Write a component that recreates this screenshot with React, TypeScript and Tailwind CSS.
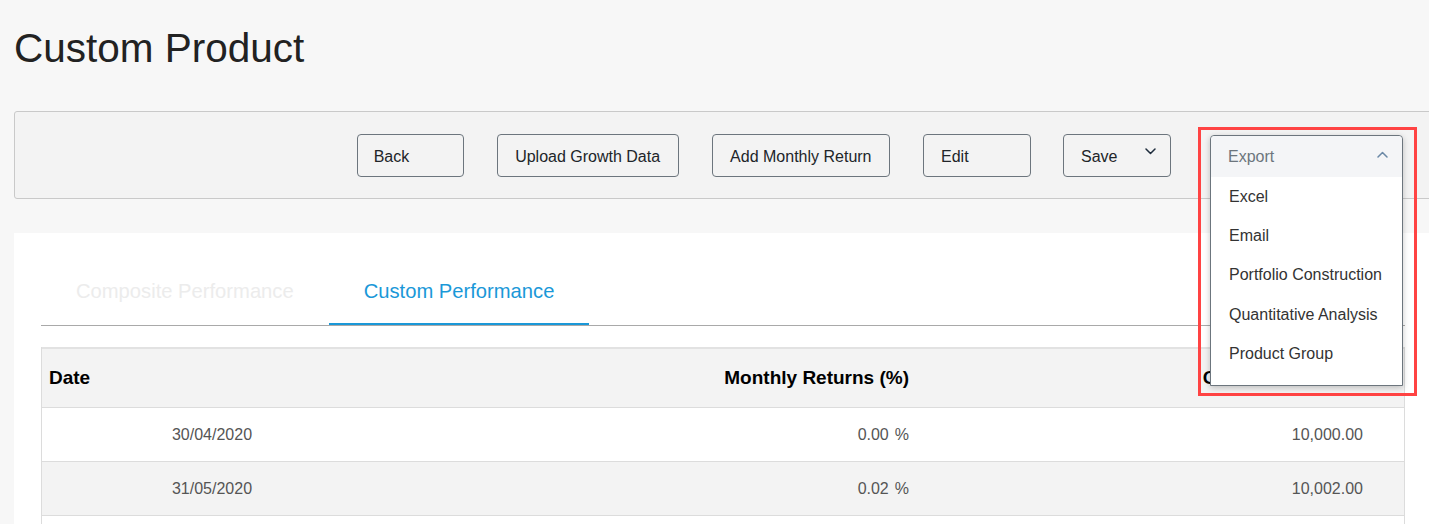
import React from "react";

function Chevron({ up = false, color }: { up?: boolean; color: string }) {
  return (
    <svg width="11" height="7" viewBox="0 0 11 7" fill="none">
      <polyline
        points={up ? "1,6 5.5,1.5 10,6" : "1,1 5.5,5.5 10,1"}
        stroke={color}
        strokeWidth="1.5"
        strokeLinecap="round"
        strokeLinejoin="round"
      />
    </svg>
  );
}

const btn =
  "h-[43px] pt-[3px] border border-[#6c757d] rounded-[4px] text-[16px] text-[#212529] bg-transparent flex items-center";

const rows = [
  { date: "30/04/2020", ret: "0.00", growth: "10,000.00", bg: "bg-white" },
  { date: "31/05/2020", ret: "0.02", growth: "10,002.00", bg: "bg-[#f3f3f3]" },
];

export default function App() {
  return (
    <div className="w-full h-[524px] overflow-hidden bg-[#f7f7f7] font-['Liberation_Sans',Arial,sans-serif]">
      <div className="relative w-[1446px] pl-[14px]">
        <h1 className="pt-[24px] text-[40.5px] leading-[48px] font-normal text-[#222]">
          Custom Product
        </h1>

        {/* Toolbar */}
        <div className="mt-[39px] w-[1418px] h-[88px] border border-[#c9c9c9] rounded-[3px] bg-[#f3f3f3] flex items-center justify-end pr-[28px]">
          <button className={`${btn} w-[107px] pl-[16px]`}>Back</button>
          <button className={`${btn} ml-[33px] px-[17.5px]`}>Upload Growth Data</button>
          <button className={`${btn} ml-[33px] px-[17.5px]`}>Add Monthly Return</button>
          <button className={`${btn} ml-[33px] w-[108px] pl-[17px]`}>Edit</button>
          <button className={`${btn} ml-[32px] w-[108px] pl-[17px] pr-[14px] justify-between`}>
            <span>Save</span>
            <span className="relative -top-[5px]">
              <Chevron color="#1f2d3d" />
            </span>
          </button>
          <div className="ml-[39px] w-[193px] h-[43px]" />
        </div>

        {/* Card */}
        <div className="mt-[34px] w-[1418px] h-[400px] bg-white pt-[26px] px-[27px]">
          <div className="flex border-b border-[#a9a9a9]">
            <div className="px-[35px] py-[20px] text-[20.2px] leading-[24px] text-[#ececec] border-b-2 border-transparent">
              Composite Performance
            </div>
            <div className="px-[35px] py-[20px] text-[20.2px] leading-[24px] text-[#1a98d8] border-b-2 border-[#1a98d8]">
              Custom Performance
            </div>
          </div>

          <div className="mt-[21px] border-x border-[#dcdcdc]">
            <div className="h-[60px] border-t-2 border-[#e2e2e2] bg-[#f3f3f3] grid grid-cols-[340px_537px_1fr] items-center text-[19px] font-bold text-black">
              <div className="pl-[7px]">Date</div>
              <div className="text-right pr-[10px]">Monthly Returns (%)</div>
              <div className="text-right pr-[27px]">Cumulative Growth</div>
            </div>
            {rows.map((r) => (
              <div
                key={r.date}
                className={`h-[54px] border-t border-[#dcdcdc] ${r.bg} grid grid-cols-[340px_537px_1fr] items-center text-[16px] text-[#555]`}
              >
                <div className="text-center">{r.date}</div>
                <div className="text-right pr-[10px]">
                  {r.ret}
                  <span className="ml-[6px]">%</span>
                </div>
                <div className="text-right pr-[41px]">{r.growth}</div>
              </div>
            ))}
            <div className="h-[54px] border-t border-[#dcdcdc] bg-white" />
          </div>
        </div>

        {/* Export dropdown (open) */}
        <div className="absolute left-[1210px] top-[135px] w-[193px] border border-[#6c757d] rounded-t-[4px] bg-white shadow-[0_2px_6px_rgba(0,0,0,0.22)]">
          <div className="h-[41px] bg-[#f4f5f7] rounded-t-[4px] flex items-center justify-between pl-[17px] pr-[14px] text-[16px] text-[#6c757d]">
            <span>Export</span>
            <span className="relative -top-[2px]">
              <Chevron up color="#6a88a6" />
            </span>
          </div>
          <div className="pb-[12px]">
            {["Excel", "Email", "Portfolio Construction", "Quantitative Analysis", "Product Group"].map(
              (t) => (
                <div key={t} className="h-[39.3px] flex items-center pl-[18px] text-[16px] text-[#333]">
                  {t}
                </div>
              )
            )}
          </div>
        </div>

        {/* Annotation box */}
        <div className="absolute left-[1198px] top-[127px] w-[219px] h-[269px] border-[3px] border-[#ff4343] pointer-events-none" />
      </div>
    </div>
  );
}
